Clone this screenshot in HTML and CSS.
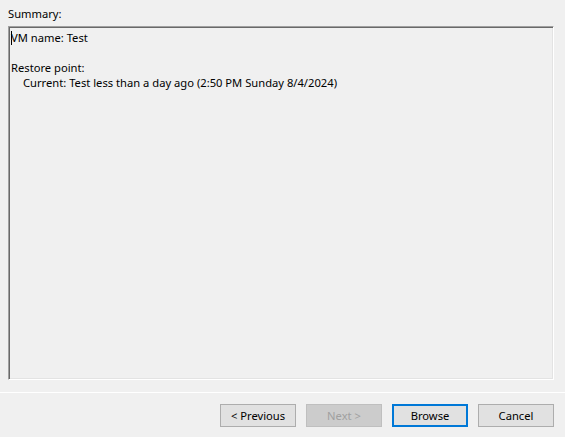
FILE: index.html
```html
<!DOCTYPE html>
<html lang="en">

<head>
    <meta charset="UTF-8">
    <meta name="viewport" content="width=device-width, initial-scale=1.0">
    <title>Restore Wizard</title>
    <link rel="stylesheet" href="styles.css">
</head>

<body>
    <div class="wizard">
        <div class="page">
            <label class="caption">Summary:</label>
            <div class="summary">
                <div class="line"><span class="caret"></span>VM name: Test</div>
                <div class="line blank"></div>
                <div class="line">Restore point:</div>
                <div class="line indent">Current: Test less than a day ago (2:50 PM Sunday 8/4/2024)</div>
            </div>
        </div>
        <div class="buttons">
            <button class="btn">&lt; Previous</button>
            <button class="btn" disabled>Next &gt;</button>
            <button class="btn default">Browse</button>
            <button class="btn">Cancel</button>
        </div>
    </div>
</body>

</html>
```

FILE: styles.css
```css
body {
    margin: 0;
    padding: 0;
    background-color: #f0f0f0;
    font-family: "Noto Sans", "Open Sans", sans-serif;
    font-size: 11.2px;
    color: #000;
}

.wizard {
    width: 565px;
    height: 437px;
    display: flex;
    flex-direction: column;
}

.page {
    padding: 6px 11px 0 8px;
    display: flex;
    flex-direction: column;
}

.caption {
    line-height: 16px;
    height: 20px;
}

/* sunken read-only text box */
.summary {
    height: 349px;
    border-top: 1px solid #a0a0a0;
    border-left: 1px solid #a0a0a0;
    border-right: 1px solid #fff;
    border-bottom: 1px solid #fff;
    box-shadow: inset 1px 1px 0 #696969, inset -1px -1px 0 #e3e3e3;
    padding: 3px 2px 0 2px;
}

.line {
    line-height: 15px;
    height: 15px;
    white-space: nowrap;
    position: relative;
}

.indent {
    padding-left: 12px;
}

.caret {
    position: absolute;
    left: 0;
    top: 1px;
    width: 1px;
    height: 14px;
    background-color: #000;
}

.buttons {
    margin-top: 12px;
    border-top: 1px solid #fff;
    display: flex;
    justify-content: flex-end;
    gap: 10px;
    padding: 11px 11px 0 0;
}

.btn {
    width: 76px;
    height: 23px;
    padding: 0;
    font-family: inherit;
    font-size: 11.2px;
    color: #000;
    background-color: #e1e1e1;
    border: 1px solid #adadad;
    box-sizing: border-box;
}

.btn:disabled {
    background-color: #cccccc;
    border-color: #bfbfbf;
    color: #a0a0a0;
}

.btn.default {
    border: 2px solid #0078d7;
}
```
